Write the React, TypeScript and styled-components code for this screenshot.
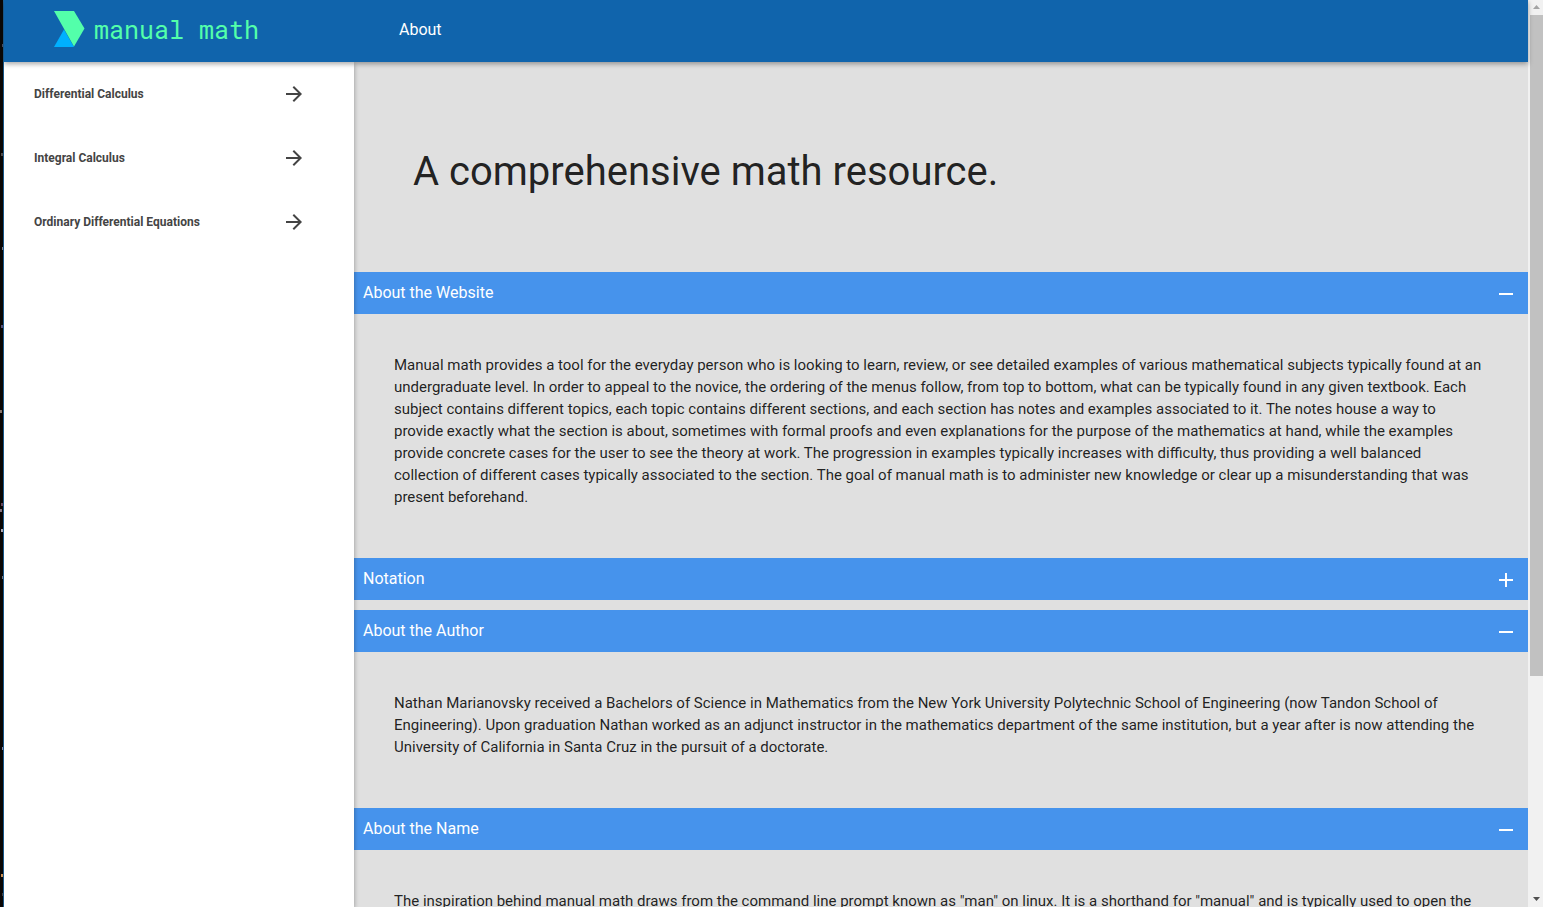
import React, { useState } from "react";
import styled, { createGlobalStyle } from "styled-components";

const GlobalStyle = createGlobalStyle`
  *, *::before, *::after { box-sizing: border-box; }
  body {
    margin: 0;
    background: #e0e0e0;
    font-family: Roboto, "Liberation Sans", sans-serif;
    color: rgba(0, 0, 0, 0.87);
  }
`;

const Window = styled.div`
  display: flex;
  height: 100vh;
  overflow: hidden;
`;

const Desktop = styled.svg`
  flex: none;
  width: 3px;
  height: 100%;
  background: #0b0706;
`;

const Page = styled.div`
  flex: 1;
  min-width: 0;
  display: flex;
  flex-direction: column;
  border-left: 1px solid #1d66a0;
`;

const Header = styled.header`
  flex: none;
  z-index: 2;
  display: flex;
  align-items: center;
  height: 62px;
  padding-bottom: 2px;
  background: #1064ac;
  box-shadow: 0 2px 5px rgba(0, 0, 0, 0.35);
`;

const Brand = styled.a`
  display: flex;
  align-items: center;
  width: 350px;
  padding-left: 50px;
  gap: 9px;
  color: #53ffaa;
  font: 25px/32px "Roboto Mono", "Liberation Mono", monospace;
  text-decoration: none;
`;

const HeaderLink = styled.a`
  margin-left: 45px;
  color: #fff;
  font-size: 16px;
  line-height: 24px;
  text-decoration: none;
`;

const Body = styled.div`
  flex: 1;
  min-height: 0;
  display: flex;
`;

const Sidebar = styled.nav`
  flex: none;
  z-index: 1;
  width: 350px;
  background: #fff;
  box-shadow: 0 2px 5px rgba(0, 0, 0, 0.35);
`;

const SubjectLink = styled.a`
  display: flex;
  align-items: center;
  justify-content: space-between;
  height: 64px;
  padding: 0 48px 0 30px;
  color: #444;
  font-size: 12px;
  font-weight: 700;
  text-decoration: none;
`;

const Main = styled.main`
  flex: 1;
  min-width: 0;
  overflow: hidden;
`;

const Title = styled.h1`
  margin: 0;
  padding: 80px 59px 70px;
  font-size: 40px;
  font-weight: 400;
  line-height: 60px;
`;

const Section = styled.section<{ $open: boolean }>`
  padding-bottom: ${(p) => (p.$open ? 0 : 10)}px;
`;

const SectionHeading = styled.h2`
  margin: 0;
`;

const SectionToggle = styled.button`
  display: flex;
  align-items: center;
  justify-content: space-between;
  width: 100%;
  height: 42px;
  padding: 0 10px 0 9px;
  border: 0;
  background: #4693ec;
  color: #fff;
  font: 400 16px/24px Roboto, "Liberation Sans", sans-serif;
  text-align: left;
  cursor: pointer;
`;

const SectionText = styled.p`
  margin: 0;
  padding: 40px 40px 50px;
  font-size: 15px;
  line-height: 22px;
`;

const Scrollbar = styled.div`
  flex: none;
  display: flex;
  flex-direction: column;
  width: 15px;
  background: #f1f1f1;
`;

const ScrollArrow = styled.svg`
  flex: none;
  width: 15px;
  height: 15px;
`;

const ScrollTrack = styled.div`
  flex: 1;
  padding-left: 2px;
`;

const ScrollThumb = styled.div`
  height: 75.4%;
  background: #c1c1c1;
`;

const subjects = [
  "Differential Calculus",
  "Integral Calculus",
  "Ordinary Differential Equations",
];

const sections = [
  {
    title: "About the Website",
    open: true,
    text: "Manual math provides a tool for the everyday person who is looking to learn, review, or see detailed examples of various mathematical subjects typically found at an undergraduate level. In order to appeal to the novice, the ordering of the menus follow, from top to bottom, what can be typically found in any given textbook. Each subject contains different topics, each topic contains different sections, and each section has notes and examples associated to it. The notes house a way to provide exactly what the section is about, sometimes with formal proofs and even explanations for the purpose of the mathematics at hand, while the examples provide concrete cases for the user to see the theory at work. The progression in examples typically increases with difficulty, thus providing a well balanced collection of different cases typically associated to the section. The goal of manual math is to administer new knowledge or clear up a misunderstanding that was present beforehand.",
  },
  { title: "Notation", open: false, text: "" },
  {
    title: "About the Author",
    open: true,
    text: "Nathan Marianovsky received a Bachelors of Science in Mathematics from the New York University Polytechnic School of Engineering (now Tandon School of Engineering). Upon graduation Nathan worked as an adjunct instructor in the mathematics department of the same institution, but a year after is now attending the University of California in Santa Cruz in the pursuit of a doctorate.",
  },
  {
    title: "About the Name",
    open: true,
    text: 'The inspiration behind manual math draws from the command line prompt known as "man" on linux. It is a shorthand for "manual" and is typically used to open the',
  },
];

const stars = [
  [2, 247, "#8a8a9a"], [1, 153, "#57504e"], [1, 325, "#5b5480"],
  [0, 410, "#8f7d75"], [1, 503, "#6f4a60"], [0, 509, "#8b7a88"],
  [1, 529, "#b9b4c4"], [2, 576, "#7c7f8c"], [2, 747, "#9094b8"],
  [1, 874, "#d99a58"], [2, 893, "#4a4748"], [2, 44, "#505468"],
] as const;

const Logo = () => (
  <svg width="31" height="38" viewBox="0 0 31 38" aria-hidden="true">
    <path d="M10 18.500 20 36H0Z" fill="#00b0ff" />
    <path d="M0 0H20L30.500 17.500 20 35.500Z" fill="#53ffaa" />
  </svg>
);

const ArrowForward = () => (
  <svg width="24" height="24" viewBox="0 0 24 24" fill="#444" aria-hidden="true">
    <path d="M12 4l-1.410 1.410L16.170 11H4v2h12.170l-5.580 5.590L12 20l8-8z" />
  </svg>
);

const ToggleIcon = ({ open }: { open: boolean }) => (
  <svg width="24" height="24" viewBox="0 0 24 24" fill="#fff" aria-hidden="true">
    <path d={open ? "M5 12h14v2H5z" : "M5 12h6V6h2v6h6v2h-6v6h-2v-6H5z"} />
  </svg>
);

function Accordion({ title, text, open }: { title: string; text: string; open: boolean }) {
  const [expanded, setExpanded] = useState(open);
  return (
    <Section $open={expanded}>
      <SectionHeading>
        <SectionToggle aria-expanded={expanded} onClick={() => setExpanded(!expanded)}>
          {title}
          <ToggleIcon open={expanded} />
        </SectionToggle>
      </SectionHeading>
      {expanded && <SectionText>{text}</SectionText>}
    </Section>
  );
}

export default function App() {
  return (
    <>
      <GlobalStyle />
      <Window>
        <Desktop aria-hidden="true">
          {stars.map(([x, y, fill]) => (
            <rect key={y} x={x} y={y} width="2" height="3" fill={fill} />
          ))}
        </Desktop>
        <Page>
          <Header>
            <Brand href="#">
              <Logo />
              manual math
            </Brand>
            <HeaderLink href="#about">About</HeaderLink>
          </Header>
          <Body>
            <Sidebar aria-label="Subjects">
              {subjects.map((name) => (
                <SubjectLink key={name} href="#">
                  {name}
                  <ArrowForward />
                </SubjectLink>
              ))}
            </Sidebar>
            <Main>
              <Title>A comprehensive math resource.</Title>
              {sections.map((s) => (
                <Accordion key={s.title} {...s} />
              ))}
            </Main>
          </Body>
        </Page>
        <Scrollbar aria-hidden="true">
          <ScrollArrow viewBox="0 0 15 15">
            <path d="M5 9h7L8.500 5z" fill="#a3a3a3" />
          </ScrollArrow>
          <ScrollTrack>
            <ScrollThumb />
          </ScrollTrack>
          <ScrollArrow viewBox="0 0 15 15">
            <path d="M5 5h7L8.500 9z" fill="#505050" />
          </ScrollArrow>
        </Scrollbar>
      </Window>
    </>
  );
}
